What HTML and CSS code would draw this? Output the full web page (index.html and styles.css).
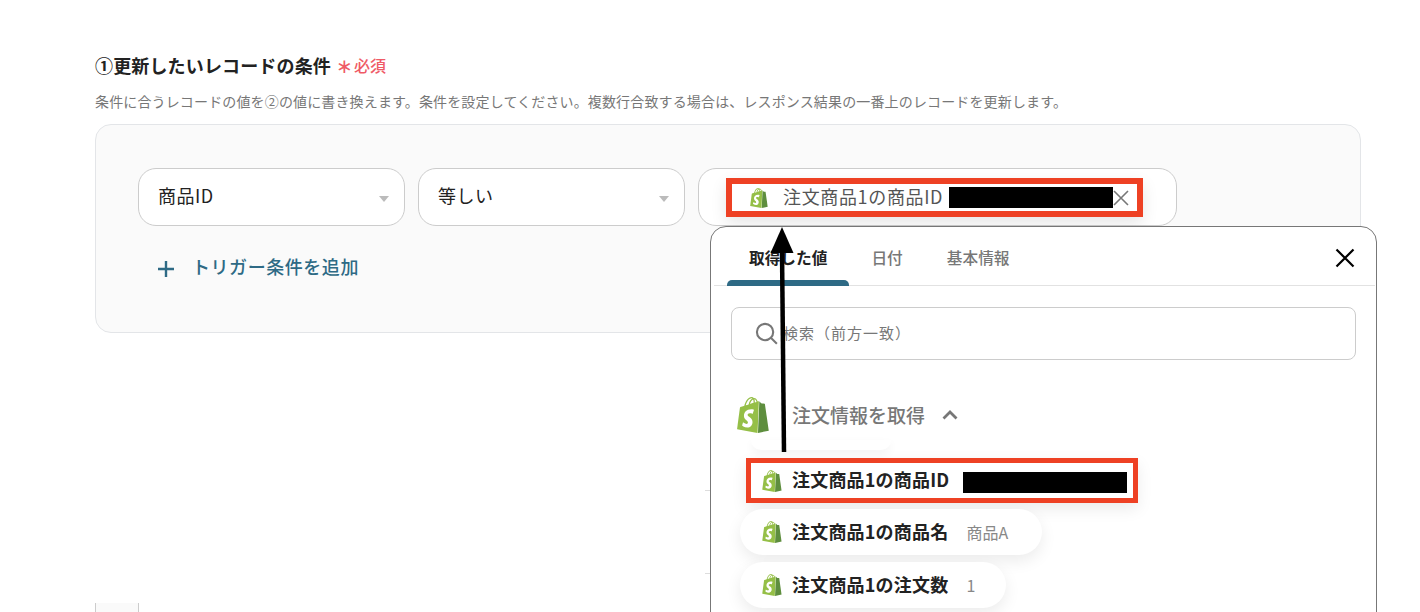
FILE: index.html
```html
<!DOCTYPE html>
<html lang="ja">
<head>
<meta charset="utf-8">
<title>更新したいレコードの条件</title>
<link rel="stylesheet" href="styles.css">
</head>
<body>
<svg class="defs" width="0" height="0" aria-hidden="true">
  <symbol id="shopify" viewBox="0 0 24 24">
    <path fill="#5e8e3e" d="M15.337 23.979l7.216-1.561s-2.604-17.613-2.625-17.730c-.018-.116-.114-.192-.211-.192s-1.929-.136-1.929-.136-1.275-1.274-1.439-1.411c-.045-.037-.075-.057-.121-.074l-.914 21.104h.023z"/>
    <path fill="#95bf47" d="M11.71 11.305s-.81-.424-1.774-.424c-1.447 0-1.504.906-1.504 1.141 0 1.232 3.24 1.715 3.24 4.629 0 2.295-1.44 3.76-3.406 3.76-2.354 0-3.54-1.465-3.54-1.465l.646-2.086s1.245 1.066 2.28 1.066c.675 0 .975-.545.975-.932 0-1.619-2.654-1.694-2.654-4.359-.034-2.237 1.571-4.416 4.827-4.416 1.257 0 1.875.361 1.875.361l-.945 2.715-.02.01zM11.17.83c.136 0 .271.038.405.135-.984.465-2.064 1.639-2.508 3.992-.656.213-1.293.405-1.889.578C7.697 3.75 8.951.84 11.17.84V.83zm1.235 2.949v.135c-.754.232-1.583.484-2.394.736.466-1.777 1.333-2.645 2.085-2.971.193.501.309 1.176.309 2.1zm.539-2.234c.694.074 1.141.867 1.429 1.755-.349.114-.735.231-1.158.366v-.252c0-.752-.096-1.371-.271-1.871v.002zm2.992 1.289c-.02 0-.06.021-.078.021s-.289.075-.714.21c-.423-1.233-1.176-2.37-2.508-2.37h-.115C12.135.209 11.669 0 11.265 0 8.159 0 6.675 3.877 6.21 5.846c-1.194.365-2.063.636-2.16.674-.675.213-.694.232-.772.87-.075.462-1.83 14.063-1.83 14.063L15.009 24l.927-21.166z"/>
  </symbol>
</svg>

<main class="page">
  <h2 class="title">①更新したいレコードの条件<span class="required"><span class="star">∗</span>必須</span></h2>
  <p class="hint">条件に合うレコードの値を②の値に書き換えます。条件を設定してください。複数行合致する場合は、レスポンス結果の一番上のレコードを更新します。</p>

  <section class="panel">
    <div class="row">
      <div class="field select">商品ID</div>
      <div class="field select">等しい</div>
      <div class="field value">
        <div class="chip">
          <svg class="logo-chip"><use href="#shopify"/></svg>
          <span class="chip-text">注文商品1の商品ID</span>
          <span class="redact"></span>
          <svg class="chip-x" viewBox="0 0 16 16"><path d="M1 1l14 14M15 1L1 15"/></svg>
        </div>
      </div>
    </div>
    <div class="add">
      <svg class="plus" viewBox="0 0 18 18"><path d="M9 1v16M1 9h16"/></svg>
      <span>トリガー条件を追加</span>
    </div>
  </section>

  <div class="next-stub"></div>

  <span class="under-line under-a"></span>
  <span class="under-line under-b"></span>

  <aside class="popup">
    <nav class="tabs">
      <span class="tab active">取得した値</span>
      <span class="tab">日付</span>
      <span class="tab">基本情報</span>
      <svg class="close" viewBox="0 0 20 20"><path d="M1.5 1.5l17 17M18.500 1.5l-17 17"/></svg>
    </nav>
    <div class="search">
      <svg class="lens" viewBox="0 0 24 24"><circle cx="10.5" cy="10.5" r="8.5"/><path d="M16.8 16.8l6 6"/></svg>
      <span class="placeholder">検索（前方一致）</span>
    </div>
    <div class="group">
      <svg class="logo-group"><use href="#shopify"/></svg>
      <span class="group-name">注文情報を取得</span>
      <svg class="chevron" viewBox="0 0 16 10"><path d="M1.5 8.500L8 2l6.500 6.500"/></svg>
    </div>
    <ul class="items">
      <li class="item marked">
        <svg class="logo-item"><use href="#shopify"/></svg>
        <span class="item-name">注文商品1の商品ID</span>
        <span class="redact"></span>
      </li>
      <li class="item">
        <svg class="logo-item"><use href="#shopify"/></svg>
        <span class="item-name">注文商品1の商品名</span>
        <span class="item-val">商品A</span>
      </li>
      <li class="item item-short">
        <svg class="logo-item"><use href="#shopify"/></svg>
        <span class="item-name">注文商品1の注文数</span>
        <span class="item-val">1</span>
      </li>
    </ul>
  </aside>

  <svg class="arrow" viewBox="0 0 40 240" width="40" height="240">
    <path class="arrow-shaft" d="M22 226L20 24"/>
    <path class="arrow-head" d="M20 1L8.500 27h23z"/>
  </svg>
</main>
</body>
</html>
```

FILE: styles.css
```css
* { box-sizing: border-box; }

html, body {
  margin: 0;
  background: #fff;
}

body {
  font-family: "Noto Sans CJK JP", "Noto Sans", sans-serif;
  color: #222;
}

.defs { position: absolute; }

.page {
  position: relative;
  width: 1420px;
  height: 612px;
  overflow: hidden;
  padding: 52px 59px 0 95px;
}

.title {
  margin: 0 0 13px;
  font-size: 18px;
  line-height: 26px;
  font-weight: 700;
  letter-spacing: .15px;
  color: #222;
  display: flex;
  align-items: center;
}

.required {
  margin-left: 5px;
  font-size: 16px;
  font-weight: 500;
  letter-spacing: 0;
  color: #ef5a66;
  display: inline-flex;
  align-items: center;
}

.star {
  font-size: 20px;
  line-height: 26px;
  margin-right: 3px;
  width: 15px;
  text-align: center;
}

.hint {
  margin: 0 0 13px;
  font-size: 14px;
  line-height: 20px;
  letter-spacing: .145px;
  color: #777;
}

.panel {
  height: 209px;
  border: 1px solid #e3e5e8;
  border-radius: 16px;
  background: #fafafa;
  padding: 43px 0 0 42px;
}

.row {
  display: flex;
  gap: 13px;
}

.field {
  height: 58px;
  border: 1px solid #ccc;
  border-radius: 18px;
  background: #fff;
  display: flex;
  align-items: center;
  padding-bottom: 5px;
  font-size: 18px;
  letter-spacing: .5px;
  color: #222;
}

.select {
  position: relative;
  width: 267px;
  padding-left: 19px;
}

.select::after {
  content: "";
  position: absolute;
  right: 15px;
  top: 27px;
  border-left: 5.500px solid transparent;
  border-right: 5.500px solid transparent;
  border-top: 6px solid #bbb;
}

.value {
  width: 479px;
  padding-left: 27px;
  position: relative;
  align-items: flex-start;
  padding-top: 9px;
  padding-bottom: 0;
  letter-spacing: 0;
}

.chip {
  width: 417px;
  height: 39px;
  border: 6px solid #ee4124;
  background: #fff;
  display: flex;
  align-items: center;
  padding-left: 17px;
  box-shadow: 0 6px 16px rgba(0, 0, 0, .1);
}

.logo-chip {
  width: 20px;
  height: 20px;
  flex: none;
}

.chip-text {
  margin-left: 14px;
  padding-bottom: 4px;
  font-size: 18px;
  line-height: 24px;
  letter-spacing: .65px;
  color: #555;
  white-space: nowrap;
}

.redact {
  display: block;
  width: 164px;
  height: 21px;
  background: #000;
  flex: none;
}

.chip .redact {
  margin-left: 6px;
}

.chip-x {
  width: 16px;
  height: 16px;
  flex: none;
  fill: none;
  stroke: #777;
  stroke-width: 1.600;
}

.add {
  display: flex;
  align-items: center;
  margin: 27px 0 0 19px;
  font-size: 18px;
  font-weight: 500;
  letter-spacing: .55px;
  line-height: 26px;
  color: #2e6a85;
}

.add span {
  padding-bottom: 4px;
}

.plus {
  width: 18px;
  height: 18px;
  margin-right: 17px;
  margin-top: 1px;
  fill: none;
  stroke: #2e6a85;
  stroke-width: 2.400;
}

.next-stub {
  width: 44px;
  height: 20px;
  margin-top: 270px;
  background: #fafafa;
  border-left: 1px solid #ccc;
  border-right: 1px solid #ccc;
}

.under-line {
  position: absolute;
  left: 705px;
  width: 6px;
  height: 1px;
  background: #ddd;
}

.under-a { top: 490px; }
.under-b { top: 573px; }

.popup {
  position: absolute;
  left: 710px;
  top: 226px;
  width: 667px;
  height: 420px;
  background: #fff;
  border: 1px solid #777;
  border-radius: 16px;
}

.tabs {
  position: relative;
  display: flex;
  height: 59px;
  margin: 0 1px 0 3px;
  padding-left: 13px;
  border-bottom: 1px solid #e2e2e2;
}

.tab {
  position: relative;
  padding: 0 22px;
  font-size: 15.700px;
  line-height: 61px;
  font-weight: 500;
  color: #777;
}

.tab.active {
  font-weight: 700;
  color: #222;
}

.tab.active::after {
  content: "";
  position: absolute;
  left: 0;
  right: 0;
  bottom: -1px;
  height: 6px;
  border-radius: 5px 5px 0 0;
  background: #2e6a85;
}

.close {
  position: absolute;
  right: 20px;
  top: 21px;
  width: 20px;
  height: 20px;
  fill: none;
  stroke: #000;
  stroke-width: 2.200;
}

.search {
  display: flex;
  align-items: center;
  height: 53px;
  margin: 21px 20px 0;
  padding-left: 23px;
  border: 1px solid #ccc;
  border-radius: 8px;
  font-size: 15px;
  letter-spacing: 1px;
  color: #777;
}

.placeholder {
  padding-bottom: 2px;
}

.lens {
  width: 23px;
  height: 23px;
  margin-right: 5px;
  fill: none;
  stroke: #777;
  stroke-width: 2.200;
}

.group {
  display: flex;
  align-items: center;
  height: 36px;
  margin: 37px 0 0 24px;
}

.logo-group {
  width: 36px;
  height: 36px;
  flex: none;
}

.group-name {
  margin-left: 21px;
  padding-bottom: 2px;
  font-size: 19px;
  font-weight: 500;
  color: #777;
}

.chevron {
  width: 16px;
  height: 10px;
  margin-left: 17px;
  fill: none;
  stroke: #777;
  stroke-width: 2.800;
}

.items {
  position: relative;
  list-style: none;
  margin: 25px 0 0;
  padding: 0 0 0 29px;
  display: flex;
  flex-direction: column;
  align-items: flex-start;
  gap: 7px;
}

.items::before {
  content: "";
  position: absolute;
  left: 40px;
  top: -18px;
  width: 140px;
  height: 10px;
  border-radius: 0 0 16px 16px;
  box-shadow: 0 4px 10px rgba(0, 0, 0, .05);
}

.item {
  display: flex;
  align-items: center;
  height: 46px;
  padding: 0 34px 0 21px;
  background: #fff;
  border-radius: 23px;
  box-shadow: 0 6px 16px rgba(0, 0, 0, .08);
}

.item-short {
  padding-right: 31px;
}

.marked {
  width: 392px;
  height: 45px;
  margin-left: 6px;
  padding: 0 0 0 10px;
  border: 5px solid #ee4124;
  border-radius: 0;
  margin-bottom: -1px;
}

.logo-item {
  width: 22px;
  height: 22px;
  flex: none;
}

.item-name {
  margin-left: 9px;
  padding-bottom: 2px;
  font-size: 18px;
  font-weight: 700;
  letter-spacing: .2px;
  color: #222;
  white-space: nowrap;
}

.marked .item-name {
  padding-bottom: 4px;
}

.item-val {
  margin-left: 18px;
  padding-bottom: 1px;
  font-size: 16px;
  color: #888;
}

.marked .redact {
  margin: 4px 0 0 14px;
}

.arrow {
  position: absolute;
  left: 762px;
  top: 226px;
}

.arrow-shaft {
  fill: none;
  stroke: #000;
  stroke-width: 4.500;
}

.arrow-head { fill: #000; }
```
